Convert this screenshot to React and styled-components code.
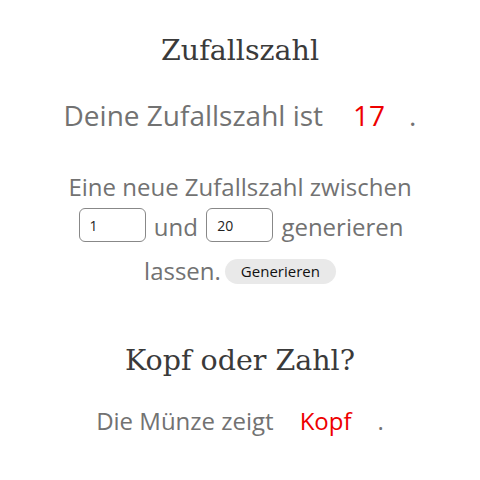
import React from 'react';
import styled, { createGlobalStyle } from 'styled-components';

const Global = createGlobalStyle`
  body {
    margin: 0;
    background: #fff;
    font-family: "Open Sans", sans-serif;
  }
`;

const Page = styled.div`
  width: 480px;
  display: flex;
  flex-direction: column;
  align-items: center;
  text-align: center;
  padding-top: 32px;
`;

const Heading = styled.h1`
  margin: ${p => p.margin || '0'};
  font-family: "DejaVu Serif", "Liberation Serif", serif;
  font-weight: normal;
  font-size: 28.5px;
  line-height: 38px;
  color: #3a3a3a;
`;

const Text = styled.p`
  margin: ${p => p.margin || '0'};
  max-width: ${p => p.width || '480px'};
  font-size: ${p => p.size || 24}px;
  line-height: 40px;
  color: #727272;
`;

const Result = styled.span`
  color: #e00;
  margin: 0 ${p => p.right || 24}px 0 ${p => p.left || 30}px;
`;

const NumberInput = styled.input`
  width: 67px;
  height: 34px;
  box-sizing: border-box;
  padding: 0 10px;
  margin: 0 2px 9px;
  border: 1px solid #888;
  border-radius: 6px;
  font-family: "Open Sans", sans-serif;
  font-size: 14px;
  color: #222;
  vertical-align: middle;
`;

const Button = styled.button`
  height: 25px;
  padding: 0 16px;
  margin: 0 0 5px 4px;
  border: none;
  border-radius: 13px;
  background: #e9e9e9;
  font-family: "Open Sans", sans-serif;
  font-size: 15px;
  color: #111;
  vertical-align: middle;
`;

export default function App() {
  return (
    <Page>
      <Global />
      <Heading>Zufallszahl</Heading>
      <Text margin="25px 0 0" size={28}>
        Deine Zufallszahl ist<Result>17</Result>.
      </Text>
      <Text margin="32px 0 0" width="360px">
        Eine neue Zufallszahl zwischen <NumberInput defaultValue="1" /> und{' '}
        <NumberInput defaultValue="20" /> generieren lassen.
        <Button>Generieren</Button>
      </Text>
      <Heading margin="51px 0 0">Kopf oder Zahl?</Heading>
      <Text margin="21px 0 0">
        Die Münze zeigt<Result left={26} right={26}>Kopf</Result>.
      </Text>
    </Page>
  );
}
